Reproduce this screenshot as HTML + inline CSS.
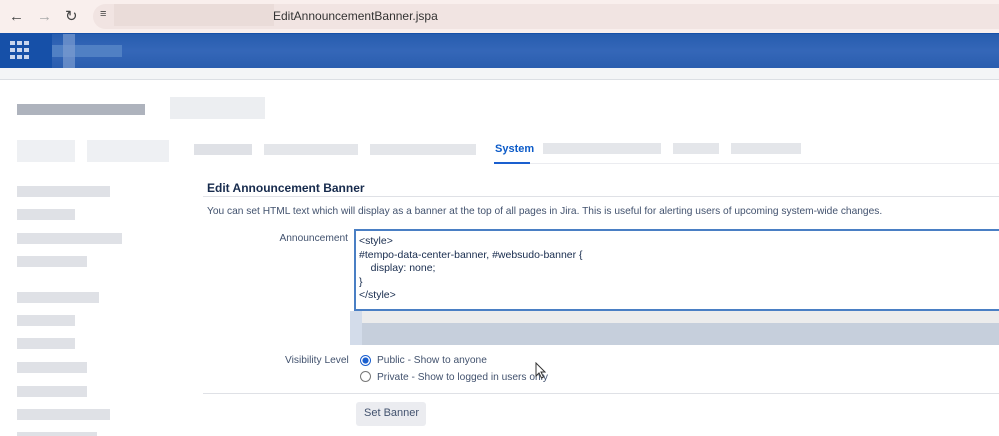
<!DOCTYPE html>
<html><head><style>
*{margin:0;padding:0;box-sizing:border-box}
body{width:999px;height:436px;overflow:hidden;background:#fff;font-family:"Liberation Sans",Arial,sans-serif;position:relative;color:#172b4d}
.a{position:absolute}
.b{position:absolute;background:#dfe1e6}
.t{position:absolute;font-size:10.2px;white-space:nowrap;color:#172b4d}
</style></head><body>
<div class="a" style="left:0;top:0;width:999px;height:33px;background:#f9efed"></div>
<div class="a" style="left:93px;top:4px;width:920px;height:25px;border-radius:13px;background:#f1e4e2"></div>
<div class="a" style="left:114px;top:4px;width:160px;height:22px;background:#e8d9d7;opacity:.8"></div>
<div class="t" style="left:9px;top:8px;font-size:15px;color:#444">&#8592;</div>
<div class="t" style="left:37px;top:8px;font-size:15px;color:#aaa">&#8594;</div>
<div class="t" style="left:65px;top:7px;font-size:15px;color:#444">&#8635;</div>
<div class="t" style="left:100px;top:8px;font-size:11px;color:#444">&#8801;</div>
<div class="t" style="left:273px;top:9px;font-size:12px;color:#333">EditAnnouncementBanner.jspa</div>
<div class="a" style="left:0;top:33px;width:999px;height:35px;background:#1650a8"></div>
<div class="a" style="left:52px;top:34px;width:947px;height:34px;background:linear-gradient(180deg,#2a5fb0,#3a6bbb 50%,#2e60b0);opacity:.85"></div>
<div class="a" style="left:52px;top:45px;width:70px;height:12px;background:#5080c4"></div>
<div class="a" style="left:63px;top:34px;width:12px;height:34px;background:#7a9bd0;opacity:.7"></div>
<div class="a" style="left:10px;top:40px">
<svg width="21" height="20"><g fill="#c9d6ee"><rect x="0" y="1" width="5" height="4"/><rect x="7" y="1" width="5" height="4"/><rect x="14" y="1" width="5" height="4"/><rect x="0" y="8" width="5" height="4"/><rect x="7" y="8" width="5" height="4"/><rect x="14" y="8" width="5" height="4"/><rect x="0" y="15" width="5" height="4"/><rect x="7" y="15" width="5" height="4"/><rect x="14" y="15" width="5" height="4"/></g></svg></div>
<div class="a" style="left:0;top:68px;width:999px;height:12px;background:#f4f5f7;border-bottom:1px solid #dcdfe4"></div>
<div class="b" style="left:17px;top:104px;width:128px;height:11px;background:#aeb3bd"></div>
<div class="b" style="left:170px;top:97px;width:95px;height:22px;background:#eceef1"></div>
<div class="b" style="left:17px;top:140px;width:58px;height:22px;background:#eef0f3"></div>
<div class="b" style="left:87px;top:140px;width:82px;height:22px;background:#eef0f3"></div>
<div class="b" style="left:194px;top:144px;width:58px;height:11px"></div>
<div class="b" style="left:264px;top:144px;width:94px;height:11px;background:#e4e6ea"></div>
<div class="b" style="left:370px;top:144px;width:106px;height:11px;background:#e4e6ea"></div>
<div class="t" style="left:495px;top:143px;font-size:11px;font-weight:bold;color:#0c5bc8">System</div>
<div class="a" style="left:494px;top:162px;width:36px;height:2px;background:#1a5fcf"></div>
<div class="b" style="left:543px;top:143px;width:118px;height:11px;background:#e4e6ea"></div>
<div class="b" style="left:673px;top:143px;width:46px;height:11px;background:#e4e6ea"></div>
<div class="b" style="left:731px;top:143px;width:70px;height:11px;background:#e4e6ea"></div>
<div class="a" style="left:530px;top:163px;width:469px;height:1px;background:#ebecf0"></div>
<div class="b" style="left:17px;top:186px;width:93px;height:11px"></div>
<div class="b" style="left:17px;top:209px;width:58px;height:11px"></div>
<div class="b" style="left:17px;top:233px;width:105px;height:11px"></div>
<div class="b" style="left:17px;top:256px;width:70px;height:11px"></div>
<div class="b" style="left:17px;top:292px;width:82px;height:11px"></div>
<div class="b" style="left:17px;top:315px;width:58px;height:11px"></div>
<div class="b" style="left:17px;top:338px;width:58px;height:11px"></div>
<div class="b" style="left:17px;top:362px;width:70px;height:11px"></div>
<div class="b" style="left:17px;top:386px;width:70px;height:11px"></div>
<div class="b" style="left:17px;top:409px;width:93px;height:11px"></div>
<div class="b" style="left:17px;top:432px;width:80px;height:4px"></div>
<div class="t" style="left:207px;top:181px;font-size:12px;font-weight:bold">Edit Announcement Banner</div>
<div class="a" style="left:203px;top:196px;width:796px;height:1px;background:#dfe1e6"></div>
<div class="t" style="left:207px;top:206px;color:#42526e">You can set HTML text which will display as a banner at the top of all pages in Jira. This is useful for alerting users of upcoming system-wide changes.</div>
<div class="t" style="left:269px;top:233px;color:#42526e;width:79px;text-align:right">Announcement</div>
<div class="a" style="left:354px;top:229px;width:660px;height:82px;border:2px solid #4a7fc4;border-right:none"></div>
<div class="t" style="left:359px;top:235px;line-height:13.5px;font-size:10.5px">&lt;style&gt;<br>#tempo-data-center-banner, #websudo-banner {<br>&nbsp;&nbsp;&nbsp;&nbsp;display: none;<br>}<br>&lt;/style&gt;</div>
<div class="a" style="left:350px;top:311px;width:649px;height:12px;background:#ececec"></div>
<div class="a" style="left:350px;top:323px;width:649px;height:22px;background:#c6cfdc"></div>
<div class="a" style="left:350px;top:311px;width:12px;height:34px;background:#d3dcea"></div>
<div class="t" style="left:285px;top:355px;color:#42526e">Visibility Level</div>
<div class="a" style="left:360px;top:355px;width:11px;height:11px;border-radius:50%;border:1px solid #1a5fcf;background:radial-gradient(#1a5fcf 2.8px,#fff 3.3px)"></div>
<div class="a" style="left:360px;top:371px;width:11px;height:11px;border-radius:50%;border:1px solid #777;background:#fff"></div>
<div class="t" style="left:377px;top:355px;color:#42526e">Public - Show to anyone</div>
<div class="t" style="left:377px;top:372px;color:#42526e">Private - Show to logged in users only</div>
<div class="a" style="left:203px;top:393px;width:796px;height:1px;background:#dfe1e6"></div>
<div class="a" style="left:356px;top:402px;width:70px;height:24px;background:#ebecf0;border-radius:3px"></div>
<div class="t" style="left:364px;top:407px;color:#42526e;font-size:11px">Set Banner</div>
<svg class="a" style="left:535px;top:362px" width="12" height="18"><path d="M1 1 L1 14 L4 11 L6.5 16 L8.5 15 L6 10 L10 10 Z" fill="#fff" stroke="#333" stroke-width="1"/></svg>
</body></html>
